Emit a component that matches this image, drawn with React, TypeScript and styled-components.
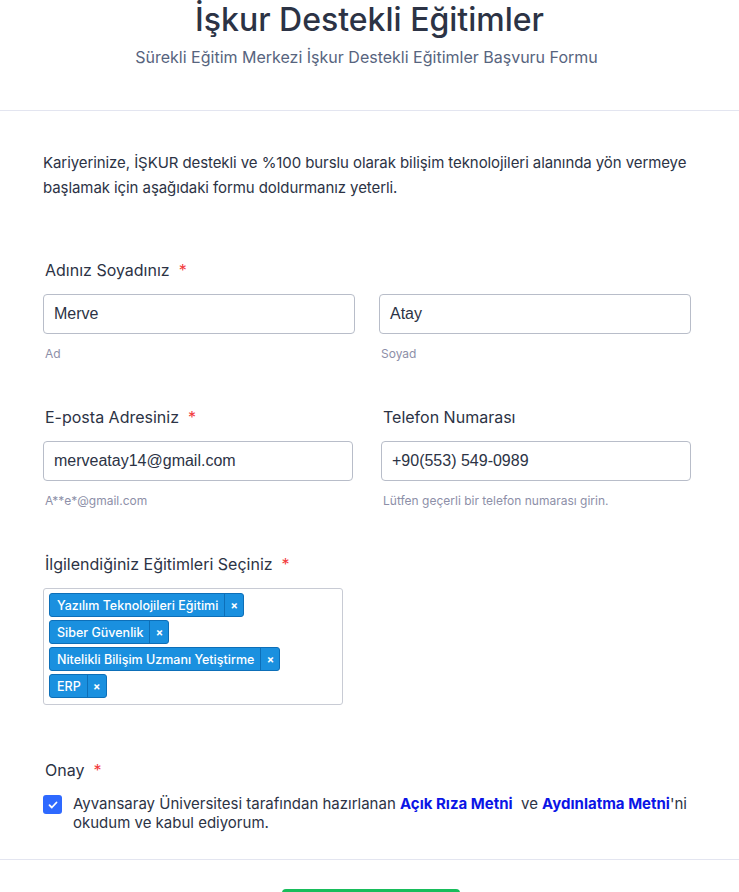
import React from "react";
import styled, { createGlobalStyle } from "styled-components";

const Global = createGlobalStyle`
  html, body { margin: 0; padding: 0; background: #fff; }
  body { font-family: Inter, "Noto Sans", sans-serif; color: #2c3345; }
  * { box-sizing: border-box; }
`;

const Page = styled.div`
  width: 739px;
  overflow: hidden;
`;

const Header = styled.header`
  display: flex;
  flex-direction: column;
  align-items: center;
  padding: 0 0 41px;
  border-bottom: 1px solid #e3e5f0;
`;

const Title = styled.h1`
  margin: 0;
  font-size: 32px;
  line-height: 40px;
  font-weight: 500;
  color: #2c3345;
`;

const Subtitle = styled.p`
  margin: 0;
  margin-top: 5px;
  padding-right: 6px;
  font-size: 16px;
  line-height: 24px;
  color: #57647e;
`;

const Form = styled.main`
  display: flex;
  flex-direction: column;
  padding: 39px 48px 0 43px;
`;

const Intro = styled.p`
  margin: 0 -8px 60px 0;
  font-size: 15px;
  line-height: 25px;
  letter-spacing: -0.08px;
  color: #2c3345;
`;

const Section = styled.section<{ $mb: number }>`
  display: flex;
  flex-direction: column;
  margin-bottom: ${(p) => p.$mb}px;
`;

const Row = styled.div<{ $gap: number }>`
  display: grid;
  grid-template-columns: 1fr 1fr;
  column-gap: ${(p) => p.$gap}px;
`;

const Field = styled.div`
  display: flex;
  flex-direction: column;
`;

const Label = styled.label`
  font-size: 16px;
  line-height: 20px;
  font-weight: 400;
  color: #2c3345;
  padding-left: 2px;
  margin-bottom: 14px;
  min-height: 20px;
`;

const Star = styled.span`
  color: #f23a3c;
  margin-left: 9px;
`;

const Input = styled.div`
  height: 40px;
  border: 1px solid #b8bdc9;
  border-radius: 4px;
  padding: 0 10px;
  display: flex;
  align-items: center;
  font-family: "Liberation Sans", Arial, sans-serif;
  font-size: 16px;
  color: #2c3345;
  background: #fff;
`;

const Sub = styled.span`
  margin-top: 12px;
  padding-left: 2px;
  font-size: 12px;
  line-height: 16px;
  color: #8d8fa8;
`;

const MultiBox = styled.div`
  width: 300px;
  height: 117px;
  border: 1px solid #c8cbd4;
  border-radius: 3px;
  padding: 4px 5px;
  display: flex;
  flex-direction: column;
  align-items: flex-start;
  gap: 3px;
`;

const Tag = styled.div`
  display: flex;
  align-items: stretch;
  height: 24px;
  background: #1a90df;
  border: 1px solid #0d6fb8;
  border-radius: 3px;
  color: #fff;
  font-size: 12.5px;
  font-weight: 500;
`;

const TagText = styled.span`
  display: flex;
  align-items: center;
  padding: 0 6px 0 7px;
`;

const TagX = styled.span`
  display: flex;
  align-items: center;
  justify-content: center;
  width: 19px;
  border-left: 1px solid #0d6fb8;
  font-size: 11px;
  font-weight: 700;
`;

const CheckRow = styled.div`
  display: flex;
  align-items: flex-start;
  gap: 11px;
`;

const Box = styled.span`
  flex: none;
  width: 19px;
  height: 19px;
  margin-top: 1px;
  border-radius: 3px;
  background: #2e69ff;
  display: flex;
  align-items: center;
  justify-content: center;
`;

const CheckText = styled.p`
  margin: 0;
  font-size: 15px;
  line-height: 19px;
  color: #2c3345;
`;

const Link = styled.a`
  color: #0b15e6;
  font-weight: 700;
  text-decoration: none;
`;

const Footer = styled.div`
  border-top: 1px solid #e3e5f0;
  margin-top: 27px;
  display: flex;
  justify-content: center;
  padding-top: 29px;
`;

const Submit = styled.button`
  width: 178px;
  height: 44px;
  margin-left: 2px;
  border: none;
  border-radius: 4px;
  background: #18bd5b;
  color: #fff;
  font-family: inherit;
  font-size: 16px;
`;

const tags = [
  "Yazılım Teknolojileri Eğitimi",
  "Siber Güvenlik",
  "Nitelikli Bilişim Uzmanı Yetiştirme",
  "ERP",
];

export default function App() {
  return (
    <Page>
      <Global />
      <Header>
        <Title>İşkur Destekli Eğitimler</Title>
        <Subtitle>Sürekli Eğitim Merkezi İşkur Destekli Eğitimler Başvuru Formu</Subtitle>
      </Header>
      <Form>
        <Intro>
          Kariyerinize, İŞKUR destekli ve %100 burslu olarak bilişim teknolojileri alanında yön vermeye
          başlamak için aşağıdaki formu doldurmanız yeterli.
        </Intro>

        <Section $mb={45}>
          <Row $gap={24}>
            <Field>
              <Label>
                Adınız Soyadınız<Star>*</Star>
              </Label>
              <Input>Merve</Input>
              <Sub>Ad</Sub>
            </Field>
            <Field>
              <Label />
              <Input>Atay</Input>
              <Sub>Soyad</Sub>
            </Field>
          </Row>
        </Section>

        <Section $mb={45}>
          <Row $gap={28}>
            <Field>
              <Label>
                E-posta Adresiniz<Star>*</Star>
              </Label>
              <Input>merveatay14@gmail.com</Input>
              <Sub>A**e*@gmail.com</Sub>
            </Field>
            <Field>
              <Label>Telefon Numarası</Label>
              <Input>+90(553) 549-0989</Input>
              <Sub>Lütfen geçerli bir telefon numarası girin.</Sub>
            </Field>
          </Row>
        </Section>

        <Section $mb={55}>
          <Label>
            İlgilendiğiniz Eğitimleri Seçiniz<Star>*</Star>
          </Label>
          <MultiBox>
            {tags.map((t) => (
              <Tag key={t}>
                <TagText>{t}</TagText>
                <TagX>×</TagX>
              </Tag>
            ))}
          </MultiBox>
        </Section>

        <Section $mb={0}>
          <Label>
            Onay<Star>*</Star>
          </Label>
          <CheckRow>
            <Box>
              <svg width="12" height="12" viewBox="0 0 12 12" fill="none">
                <path d="M2.5 6.2l2.3 2.3 4.7-5" stroke="#fff" strokeWidth="1.8" strokeLinecap="round" strokeLinejoin="round" />
              </svg>
            </Box>
            <CheckText>
              Ayvansaray Üniversitesi tarafından hazırlanan <Link>Açık Rıza Metni</Link>&nbsp; ve{" "}
              <Link>Aydınlatma Metni</Link>'ni okudum ve kabul ediyorum.
            </CheckText>
          </CheckRow>
        </Section>
      </Form>
      <Footer>
        <Submit>Gönder</Submit>
      </Footer>
    </Page>
  );
}
